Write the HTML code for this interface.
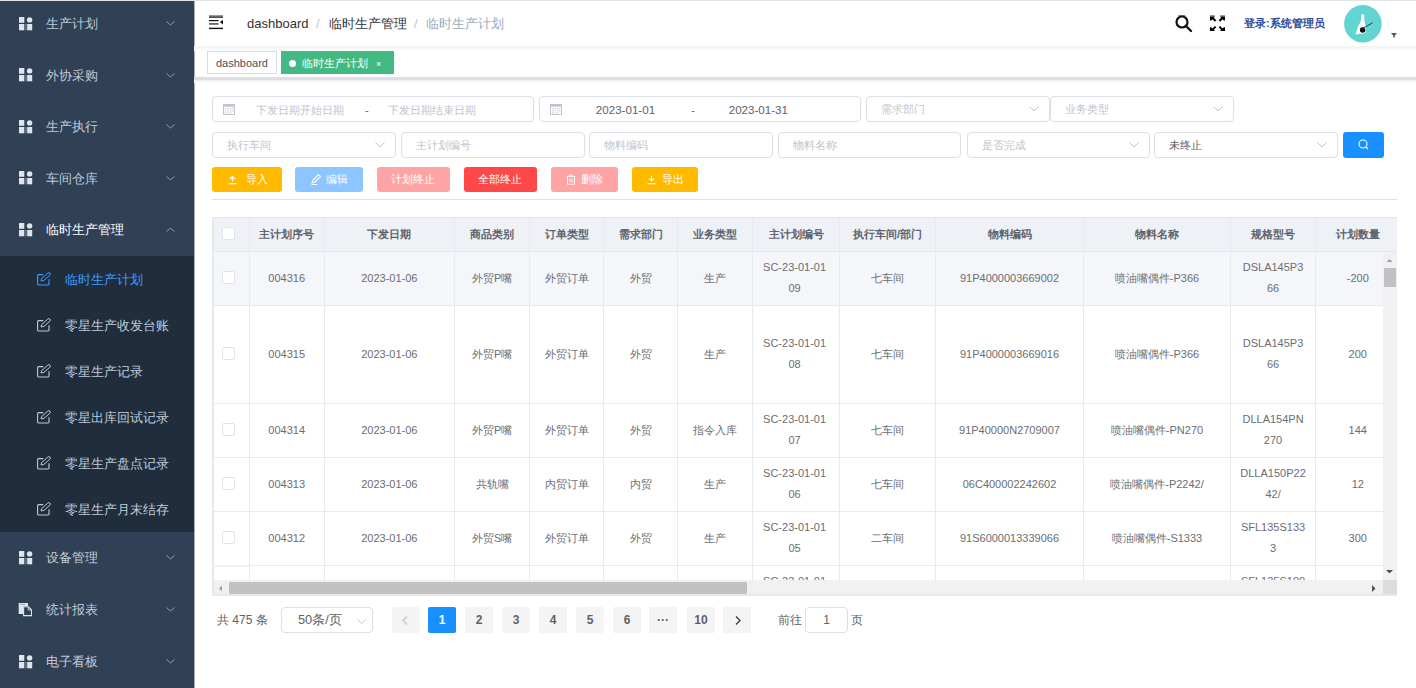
<!DOCTYPE html><html><head><meta charset="utf-8"><style>
*{box-sizing:border-box;margin:0;padding:0}
html,body{width:1416px;height:688px;overflow:hidden;background:#fff;font-family:"Liberation Sans",sans-serif;color:#606266}
.a{position:absolute;white-space:nowrap}
#side{position:absolute;left:0;top:0;width:194px;height:688px;background:#304156;overflow:hidden}
.mi{position:absolute;left:0;width:194px;height:51.5px;color:#bfcbd9;font-size:13px}
.mi .t{position:absolute;left:46px;top:0;line-height:51.5px;white-space:nowrap}
.mi svg.ic{position:absolute;left:18px;top:18.7px}
.mi svg.ar{position:absolute;left:166px;top:23px}
.sub{position:absolute;left:0;top:256px;width:194px;height:276px;background:#1f2d3d}
.si{position:absolute;left:0;width:194px;height:46px;color:#bfcbd9;font-size:13px}
.si .t{position:absolute;left:65px;top:1px;line-height:46px;white-space:nowrap}
.si svg{position:absolute;left:37px;top:16px}
.inp{position:absolute;height:26px;border:1px solid #dcdfe6;border-radius:4px;background:#fff;font-size:11px;color:#c0c4cc}
.inp .p{position:absolute;top:0;line-height:24px;white-space:nowrap}
.inp svg.ar{position:absolute;right:10px;top:9px}
.btn{position:absolute;top:166.5px;height:25px;border-radius:3px;color:#fff;font-size:11px;line-height:25px;white-space:nowrap}
.btn span{position:absolute;top:0.7px}
.th,.td{position:absolute;font-size:11px;text-align:center;line-height:21px;color:#6a6d73}
.th{color:#5d636e;font-weight:bold}
.pg{position:absolute;top:607px;width:28px;height:26px;background:#f4f4f5;border-radius:2px;font-size:12px;font-weight:bold;color:#606266;text-align:center;line-height:26px}
</style></head><body>
<div id="side">
<div class="mi" style="top:-1.75px"><svg class="ic" style="left:18.7px" width="14" height="14" viewBox="0 0 14 14"><g fill="#dfe5ec"><rect x="0" y="0" width="5.3" height="5.8"/><circle cx="10.6" cy="2.9" r="2.7"/><rect x="0" y="7" width="5.3" height="6.3"/><rect x="8.2" y="7" width="5" height="6.3"/></g><rect x="6.4" y="7" width="1.2" height="6.3" fill="#7d899a"/></svg><span class="t">生产计划</span><svg class="ar" width="9" height="5" viewBox="0 0 9 5"><path d="M0.5 0.5L4.5 4L8.5 0.5" fill="none" stroke="#8e9cae" stroke-width="1"/></svg></div>
<div class="mi" style="top:49.75px"><svg class="ic" style="left:18.7px" width="14" height="14" viewBox="0 0 14 14"><g fill="#dfe5ec"><rect x="0" y="0" width="5.3" height="5.8"/><circle cx="10.6" cy="2.9" r="2.7"/><rect x="0" y="7" width="5.3" height="6.3"/><rect x="8.2" y="7" width="5" height="6.3"/></g><rect x="6.4" y="7" width="1.2" height="6.3" fill="#7d899a"/></svg><span class="t">外协采购</span><svg class="ar" width="9" height="5" viewBox="0 0 9 5"><path d="M0.5 0.5L4.5 4L8.5 0.5" fill="none" stroke="#8e9cae" stroke-width="1"/></svg></div>
<div class="mi" style="top:101.25px"><svg class="ic" style="left:18.7px" width="14" height="14" viewBox="0 0 14 14"><g fill="#dfe5ec"><rect x="0" y="0" width="5.3" height="5.8"/><circle cx="10.6" cy="2.9" r="2.7"/><rect x="0" y="7" width="5.3" height="6.3"/><rect x="8.2" y="7" width="5" height="6.3"/></g><rect x="6.4" y="7" width="1.2" height="6.3" fill="#7d899a"/></svg><span class="t">生产执行</span><svg class="ar" width="9" height="5" viewBox="0 0 9 5"><path d="M0.5 0.5L4.5 4L8.5 0.5" fill="none" stroke="#8e9cae" stroke-width="1"/></svg></div>
<div class="mi" style="top:152.75px"><svg class="ic" style="left:18.7px" width="14" height="14" viewBox="0 0 14 14"><g fill="#dfe5ec"><rect x="0" y="0" width="5.3" height="5.8"/><circle cx="10.6" cy="2.9" r="2.7"/><rect x="0" y="7" width="5.3" height="6.3"/><rect x="8.2" y="7" width="5" height="6.3"/></g><rect x="6.4" y="7" width="1.2" height="6.3" fill="#7d899a"/></svg><span class="t">车间仓库</span><svg class="ar" width="9" height="5" viewBox="0 0 9 5"><path d="M0.5 0.5L4.5 4L8.5 0.5" fill="none" stroke="#8e9cae" stroke-width="1"/></svg></div>
<div class="mi" style="top:204.25px"><svg class="ic" style="left:18.7px" width="14" height="14" viewBox="0 0 14 14"><g fill="#dfe5ec"><rect x="0" y="0" width="5.3" height="5.8"/><circle cx="10.6" cy="2.9" r="2.7"/><rect x="0" y="7" width="5.3" height="6.3"/><rect x="8.2" y="7" width="5" height="6.3"/></g><rect x="6.4" y="7" width="1.2" height="6.3" fill="#7d899a"/></svg><span class="t" style="color:#fff">临时生产管理</span><svg class="ar" width="9" height="5" viewBox="0 0 9 5"><path d="M0.5 4.5L4.5 1L8.5 4.5" fill="none" stroke="#8e9cae" stroke-width="1"/></svg></div>
<div class="sub">
<div class="si" style="top:0px;color:#409eff"><svg width="14" height="14" viewBox="0 0 14 14"><path d="M6.2 2.6H1.7A1 1 0 0 0 0.6 3.7V11.9A1 1 0 0 0 1.7 13H10.9A1 1 0 0 0 12 11.9V7.3" fill="none" stroke="#409eff" stroke-width="1.1"/><path d="M4 8.9L4.7 6.5L10.8 1.1A1.4 1.4 0 0 1 12.9 3.2L6.9 8.4Z" fill="none" stroke="#409eff" stroke-width="1"/></svg><span class="t">临时生产计划</span></div>
<div class="si" style="top:46px;color:#bfcbd9"><svg width="14" height="14" viewBox="0 0 14 14"><path d="M6.2 2.6H1.7A1 1 0 0 0 0.6 3.7V11.9A1 1 0 0 0 1.7 13H10.9A1 1 0 0 0 12 11.9V7.3" fill="none" stroke="#bfcbd9" stroke-width="1.1"/><path d="M4 8.9L4.7 6.5L10.8 1.1A1.4 1.4 0 0 1 12.9 3.2L6.9 8.4Z" fill="none" stroke="#bfcbd9" stroke-width="1"/></svg><span class="t">零星生产收发台账</span></div>
<div class="si" style="top:92px;color:#bfcbd9"><svg width="14" height="14" viewBox="0 0 14 14"><path d="M6.2 2.6H1.7A1 1 0 0 0 0.6 3.7V11.9A1 1 0 0 0 1.7 13H10.9A1 1 0 0 0 12 11.9V7.3" fill="none" stroke="#bfcbd9" stroke-width="1.1"/><path d="M4 8.9L4.7 6.5L10.8 1.1A1.4 1.4 0 0 1 12.9 3.2L6.9 8.4Z" fill="none" stroke="#bfcbd9" stroke-width="1"/></svg><span class="t">零星生产记录</span></div>
<div class="si" style="top:138px;color:#bfcbd9"><svg width="14" height="14" viewBox="0 0 14 14"><path d="M6.2 2.6H1.7A1 1 0 0 0 0.6 3.7V11.9A1 1 0 0 0 1.7 13H10.9A1 1 0 0 0 12 11.9V7.3" fill="none" stroke="#bfcbd9" stroke-width="1.1"/><path d="M4 8.9L4.7 6.5L10.8 1.1A1.4 1.4 0 0 1 12.9 3.2L6.9 8.4Z" fill="none" stroke="#bfcbd9" stroke-width="1"/></svg><span class="t">零星出库回试记录</span></div>
<div class="si" style="top:184px;color:#bfcbd9"><svg width="14" height="14" viewBox="0 0 14 14"><path d="M6.2 2.6H1.7A1 1 0 0 0 0.6 3.7V11.9A1 1 0 0 0 1.7 13H10.9A1 1 0 0 0 12 11.9V7.3" fill="none" stroke="#bfcbd9" stroke-width="1.1"/><path d="M4 8.9L4.7 6.5L10.8 1.1A1.4 1.4 0 0 1 12.9 3.2L6.9 8.4Z" fill="none" stroke="#bfcbd9" stroke-width="1"/></svg><span class="t">零星生产盘点记录</span></div>
<div class="si" style="top:230px;color:#bfcbd9"><svg width="14" height="14" viewBox="0 0 14 14"><path d="M6.2 2.6H1.7A1 1 0 0 0 0.6 3.7V11.9A1 1 0 0 0 1.7 13H10.9A1 1 0 0 0 12 11.9V7.3" fill="none" stroke="#bfcbd9" stroke-width="1.1"/><path d="M4 8.9L4.7 6.5L10.8 1.1A1.4 1.4 0 0 1 12.9 3.2L6.9 8.4Z" fill="none" stroke="#bfcbd9" stroke-width="1"/></svg><span class="t">零星生产月末结存</span></div>
</div>
<div class="mi" style="top:532.05px"><svg class="ic" style="left:18.7px" width="14" height="14" viewBox="0 0 14 14"><g fill="#dfe5ec"><rect x="0" y="0" width="5.3" height="5.8"/><circle cx="10.6" cy="2.9" r="2.7"/><rect x="0" y="7" width="5.3" height="6.3"/><rect x="8.2" y="7" width="5" height="6.3"/></g><rect x="6.4" y="7" width="1.2" height="6.3" fill="#7d899a"/></svg><span class="t">设备管理</span><svg class="ar" width="9" height="5" viewBox="0 0 9 5"><path d="M0.5 0.5L4.5 4L8.5 0.5" fill="none" stroke="#8e9cae" stroke-width="1"/></svg></div>
<div class="mi" style="top:584.25px"><svg class="ic" width="14" height="14" viewBox="0 0 14 14"><path d="M0.7 0H10V3.2H5V11H0.7Z" fill="#dfe5ec"/><rect x="2" y="0.9" width="5" height="0.8" fill="#8a95a5"/><path d="M5.6 3.8H10.4L13.5 6.9V12.6H5.6Z" fill="none" stroke="#dfe5ec" stroke-width="1.1"/><path d="M10.2 3.8V7H13.5" fill="none" stroke="#dfe5ec" stroke-width="0.8"/></svg><span class="t">统计报表</span><svg class="ar" width="9" height="5" viewBox="0 0 9 5"><path d="M0.5 0.5L4.5 4L8.5 0.5" fill="none" stroke="#8e9cae" stroke-width="1"/></svg></div>
<div class="mi" style="top:635.95px"><svg class="ic" style="left:18.7px" width="14" height="14" viewBox="0 0 14 14"><g fill="#dfe5ec"><rect x="0" y="0" width="5.3" height="5.8"/><circle cx="10.6" cy="2.9" r="2.7"/><rect x="0" y="7" width="5.3" height="6.3"/><rect x="8.2" y="7" width="5" height="6.3"/></g><rect x="6.4" y="7" width="1.2" height="6.3" fill="#7d899a"/></svg><span class="t">电子看板</span><svg class="ar" width="9" height="5" viewBox="0 0 9 5"><path d="M0.5 0.5L4.5 4L8.5 0.5" fill="none" stroke="#8e9cae" stroke-width="1"/></svg></div>
</div>
<div class="a" style="left:194px;top:0;width:1px;height:688px;background:#aab0b8"></div>
<div class="a" style="left:0;top:0;width:1416px;height:1px;background:#e2e4e8"></div>
<div class="a" style="left:194px;top:46px;width:1222px;height:5px;background:linear-gradient(#f2f3f4,#fdfdfd)"></div>
<svg class="a" style="left:209px;top:15px" width="15" height="15" viewBox="0 0 15 15"><rect x="0" y="0" width="14" height="1.4" fill="#999"/><rect x="0" y="1.4" width="14" height="1.4" fill="#222"/><rect x="0" y="5" width="9.6" height="1.2" fill="#111"/><rect x="0" y="8" width="9.6" height="1.8" fill="#666"/><path d="M14 4.9L10.8 7.1L14 9.4Z" fill="#111"/><rect x="0" y="12.7" width="14" height="1.4" fill="#111"/></svg>
<div class="a" style="left:247px;top:15px;font-size:13px;line-height:18px;color:#303133">dashboard</div>
<div class="a" style="left:316px;top:15px;font-size:13px;line-height:18px;color:#c0c4cc">/</div>
<div class="a" style="left:329px;top:15px;font-size:13px;line-height:18px;color:#303133">临时生产管理</div>
<div class="a" style="left:414px;top:15px;font-size:13px;line-height:18px;color:#c0c4cc">/</div>
<div class="a" style="left:426px;top:15px;font-size:13px;line-height:18px;color:#97a8be">临时生产计划</div>
<svg class="a" style="left:1174.6px;top:15px" width="18" height="18" viewBox="0 0 18 18"><rect x="3.3" y="0.3" width="7" height="1" fill="#555"/><circle cx="7" cy="7" r="5.5" fill="none" stroke="#111" stroke-width="2.2"/><path d="M11 11L16 16" stroke="#111" stroke-width="2.4" stroke-linecap="round"/></svg>
<svg class="a" style="left:1210px;top:15px" width="15" height="16" viewBox="0 0 15 16"><g fill="#000"><rect x="0" y="0" width="4.8" height="1.6" fill="#999"/><rect x="10.2" y="0" width="4.8" height="1.6" fill="#999"/><path d="M0 1.6H5L3.8 2.8L6.3 5.3L4.9 6.7L2.4 4.2L1.2 5.4L0 5.4Z"/><path d="M15 1.6H10L11.2 2.8L8.7 5.3L10.1 6.7L12.6 4.2L13.8 5.4L15 5.4Z"/><path d="M0 16H5L3.8 14.8L6.3 12.3L4.9 10.9L2.4 13.4L1.2 12.2L0 12.2Z"/><path d="M15 16H10L11.2 14.8L8.7 12.3L10.1 10.9L12.6 13.4L13.8 12.2L15 12.2Z"/></g></svg>
<div class="a" style="left:1244px;top:15px;font-size:11px;line-height:16px;color:#2d4e9e;font-weight:bold">登录:系统管理员</div>
<svg class="a" style="left:1344px;top:4.5px" width="38" height="38" viewBox="0 0 38 38"><circle cx="18.9" cy="18.8" r="18.8" fill="#62d4d2"/><path d="M17.2 9.5Q18.8 8.8 20.2 9.8L20.3 14.5L21 19L22.2 23L21.3 27.5L19 28.8L15.5 28.5L14 29.5L11.5 28.8L12.8 25.5L14.2 20.5L16.5 17.5L17 14Z" fill="#fff"/><circle cx="18.6" cy="25" r="2.7" fill="#111"/><path d="M16.5 22.8L20.5 21.8L20.8 24Z" fill="#444"/><path d="M20.5 22.5L28.5 17.8" stroke="#222" stroke-width="0.9"/></svg>
<svg class="a" style="left:1391px;top:32.5px" width="6" height="5" viewBox="0 0 6 5"><path d="M0 0H6L3.8 2.5V4.5H2.2V2.5Z" fill="#555"/></svg>
<div class="a" style="left:194px;top:77px;width:1222px;height:2.5px;background:#dcdfe5"></div><div class="a" style="left:194px;top:79.5px;width:1222px;height:3px;background:linear-gradient(#eceef2,#fff)"></div>
<div class="a" style="left:207px;top:51px;width:70px;height:23px;border:1px solid #d8dce5;background:#fff;font-size:11px;line-height:23px;color:#495060;padding-left:8px">dashboard</div>
<div class="a" style="left:281px;top:51px;width:113px;height:23px;background:#42b983;font-size:11px;line-height:23px;color:#fff"><span style="position:absolute;left:8px;top:9px;width:7px;height:7px;border-radius:50%;background:#fff"></span><span style="position:absolute;left:21px;top:1px">临时生产计划</span><span style="position:absolute;left:95px;top:1.5px;font-size:9px">×</span></div>
<div class="inp" style="left:212.0px;top:96px;width:322.0px"><svg class="a" style="left:10px;top:6px" width="12" height="12" viewBox="0 0 12 12"><rect x="0.5" y="1.5" width="11" height="10" fill="none" stroke="#c0c4cc" stroke-width="1"/><rect x="0.5" y="1.5" width="11" height="2.2" fill="#c0c4cc"/><g fill="#d0d3da"><rect x="2" y="5" width="1.5" height="1.2"/><rect x="4.5" y="5" width="1.5" height="1.2"/><rect x="7" y="5" width="1.5" height="1.2"/><rect x="9" y="5" width="1.5" height="1.2"/><rect x="2" y="7.2" width="1.5" height="1.2"/><rect x="4.5" y="7.2" width="1.5" height="1.2"/><rect x="7" y="7.2" width="1.5" height="1.2"/><rect x="9" y="7.2" width="1.5" height="1.2"/><rect x="2" y="9.3" width="1.5" height="1.2"/><rect x="4.5" y="9.3" width="1.5" height="1.2"/><rect x="7" y="9.3" width="1.5" height="1.2"/></g></svg><span class="p" style="left:43px;top:1px">下发日期开始日期</span><span class="p" style="left:152px;top:1px;color:#606266">-</span><span class="p" style="left:175px;top:1px">下发日期结束日期</span></div>
<div class="inp" style="left:539.3px;top:96px;width:322.0px"><svg class="a" style="left:10px;top:6px" width="12" height="12" viewBox="0 0 12 12"><rect x="0.5" y="1.5" width="11" height="10" fill="none" stroke="#c0c4cc" stroke-width="1"/><rect x="0.5" y="1.5" width="11" height="2.2" fill="#c0c4cc"/><g fill="#d0d3da"><rect x="2" y="5" width="1.5" height="1.2"/><rect x="4.5" y="5" width="1.5" height="1.2"/><rect x="7" y="5" width="1.5" height="1.2"/><rect x="9" y="5" width="1.5" height="1.2"/><rect x="2" y="7.2" width="1.5" height="1.2"/><rect x="4.5" y="7.2" width="1.5" height="1.2"/><rect x="7" y="7.2" width="1.5" height="1.2"/><rect x="9" y="7.2" width="1.5" height="1.2"/><rect x="2" y="9.3" width="1.5" height="1.2"/><rect x="4.5" y="9.3" width="1.5" height="1.2"/><rect x="7" y="9.3" width="1.5" height="1.2"/></g></svg><span class="p" style="left:55.5px;top:1px;font-size:11.6px;color:#606266">2023-01-01</span><span class="p" style="left:151px;top:1px;color:#606266">-</span><span class="p" style="left:188.4px;top:1px;font-size:11.6px;color:#606266">2023-01-31</span></div>
<div class="inp" style="left:865.8px;top:96px;width:184.0px"><span class="p" style="left:14px;color:#c0c4cc">需求部门</span><svg class="ar" width="10" height="6" viewBox="0 0 10 6"><path d="M0.5 0.5L5 5L9.5 0.5" fill="none" stroke="#c0c4cc" stroke-width="1"/></svg></div>
<div class="inp" style="left:1050.3px;top:96px;width:183.9px"><span class="p" style="left:14px;color:#c0c4cc">业务类型</span><svg class="ar" width="10" height="6" viewBox="0 0 10 6"><path d="M0.5 0.5L5 5L9.5 0.5" fill="none" stroke="#c0c4cc" stroke-width="1"/></svg></div>
<div class="inp" style="left:212.0px;top:132px;width:184.4px"><span class="p" style="left:14px;color:#c0c4cc">执行车间</span><svg class="ar" width="10" height="6" viewBox="0 0 10 6"><path d="M0.5 0.5L5 5L9.5 0.5" fill="none" stroke="#c0c4cc" stroke-width="1"/></svg></div>
<div class="inp" style="left:400.6px;top:132px;width:184.0px"><span class="p" style="left:14px;color:#c0c4cc">主计划编号</span></div>
<div class="inp" style="left:589.3px;top:132px;width:184.0px"><span class="p" style="left:14px;color:#c0c4cc">物料编码</span></div>
<div class="inp" style="left:777.8px;top:132px;width:183.2px"><span class="p" style="left:14px;color:#c0c4cc">物料名称</span></div>
<div class="inp" style="left:966.5px;top:132px;width:183.3px"><span class="p" style="left:14px;color:#c0c4cc">是否完成</span><svg class="ar" width="10" height="6" viewBox="0 0 10 6"><path d="M0.5 0.5L5 5L9.5 0.5" fill="none" stroke="#c0c4cc" stroke-width="1"/></svg></div>
<div class="inp" style="left:1154.4px;top:132px;width:183.6px"><span class="p" style="left:14px;color:#606266">未终止</span><svg class="ar" width="10" height="6" viewBox="0 0 10 6"><path d="M0.5 0.5L5 5L9.5 0.5" fill="none" stroke="#c0c4cc" stroke-width="1"/></svg></div>
<div class="a" style="left:1343px;top:132px;width:41px;height:26px;background:#1890ff;border-radius:3px"><svg class="a" style="left:15px;top:7px" width="11" height="11" viewBox="0 0 11 11"><circle cx="5" cy="5" r="4" fill="none" stroke="#fff" stroke-width="1.1"/><path d="M8 8L10 10" stroke="#fff" stroke-width="1.1"/></svg></div>
<div class="btn" style="left:212px;width:70px;background:#ffba00"><svg class="a" style="left:16px;top:8.5px" width="10" height="10" viewBox="0 0 10 10"><path d="M4.5 1.5V6.5M2 4L4.5 1.5L7 4M0.5 8.8H8.8" fill="none" stroke="#fff" stroke-width="1.1"/></svg><span style="left:34px">导入</span></div>
<div class="btn" style="left:295px;width:68px;background:#8cc5ff"><svg class="a" style="left:16px;top:6px" width="11" height="12" viewBox="0 0 11 12"><path d="M1 10L2 7L7.5 1.5L9.5 3.5L4 9Z M0.5 11.5H6" fill="none" stroke="#fff" stroke-width="1.1"/></svg><span style="left:31px">编辑</span></div>
<div class="btn" style="left:377px;width:73px;background:#ffa4a4"><span style="left:14px">计划终止</span></div>
<div class="btn" style="left:464px;width:73px;background:#ff4949"><span style="left:14px">全部终止</span></div>
<div class="btn" style="left:551px;width:66.5px;background:#ffa4a4"><svg class="a" style="left:15px;top:7.5px" width="10" height="11" viewBox="0 0 10 11"><path d="M0.5 2.5H9.5M3.5 2.5V1H6.5V2.5M1.5 2.5V10.3H8.5V2.5M4 4.5V8.5M6 4.5V8.5" fill="none" stroke="#fff" stroke-width="0.9"/></svg><span style="left:30px">删除</span></div>
<div class="btn" style="left:632px;width:66px;background:#ffba00"><svg class="a" style="left:15px;top:8.5px" width="10" height="10" viewBox="0 0 10 10"><path d="M4.5 1V6M2 3.5L4.5 6L7 3.5M0.5 8.8H8.8" fill="none" stroke="#fff" stroke-width="1.1"/></svg><span style="left:30px">导出</span></div>
<div class="a" style="left:212px;top:199px;width:1185px;height:1px;background:#dcdfe6"></div>
<div class="a" style="left:212px;top:217px;width:1185px;height:378px;overflow:hidden">
<div class="a" style="left:0;top:0;width:1185px;height:35px;background:#eef1f6;border-bottom:1px solid #e3e8ee"></div>
<div class="a" style="left:0;top:35px;width:1185px;height:53px;background:#f4f6fa"></div>
<div class="a" style="left:0;top:88px;width:1185px;height:1px;background:#e6ebf1"></div>
<div class="a" style="left:0;top:186px;width:1185px;height:1px;background:#e6ebf1"></div>
<div class="a" style="left:0;top:240px;width:1185px;height:1px;background:#e6ebf1"></div>
<div class="a" style="left:0;top:294px;width:1185px;height:1px;background:#e6ebf1"></div>
<div class="a" style="left:0;top:348px;width:1185px;height:1px;background:#e6ebf1"></div>
<div class="a" style="left:37px;top:0;width:1px;height:378px;background:#e6ebf1"></div>
<div class="a" style="left:112px;top:0;width:1px;height:378px;background:#e6ebf1"></div>
<div class="a" style="left:242px;top:0;width:1px;height:378px;background:#e6ebf1"></div>
<div class="a" style="left:317px;top:0;width:1px;height:378px;background:#e6ebf1"></div>
<div class="a" style="left:391px;top:0;width:1px;height:378px;background:#e6ebf1"></div>
<div class="a" style="left:465px;top:0;width:1px;height:378px;background:#e6ebf1"></div>
<div class="a" style="left:540px;top:0;width:1px;height:378px;background:#e6ebf1"></div>
<div class="a" style="left:627px;top:0;width:1px;height:378px;background:#e6ebf1"></div>
<div class="a" style="left:723px;top:0;width:1px;height:378px;background:#e6ebf1"></div>
<div class="a" style="left:871px;top:0;width:1px;height:378px;background:#e6ebf1"></div>
<div class="a" style="left:1018px;top:0;width:1px;height:378px;background:#e6ebf1"></div>
<div class="a" style="left:1103px;top:0;width:1px;height:378px;background:#e6ebf1"></div>
<div class="th" style="left:37.4px;width:74.6px;top:7px">主计划序号</div>
<div class="th" style="left:112.0px;width:130.7px;top:7px">下发日期</div>
<div class="th" style="left:242.7px;width:74.8px;top:7px">商品类别</div>
<div class="th" style="left:317.5px;width:74.1px;top:7px">订单类型</div>
<div class="th" style="left:391.6px;width:74.1px;top:7px">需求部门</div>
<div class="th" style="left:465.7px;width:75.1px;top:7px">业务类型</div>
<div class="th" style="left:540.8px;width:86.6px;top:7px">主计划编号</div>
<div class="th" style="left:627.4px;width:96.1px;top:7px">执行车间/部门</div>
<div class="th" style="left:723.5px;width:148.0px;top:7px">物料编码</div>
<div class="th" style="left:871.5px;width:147.0px;top:7px">物料名称</div>
<div class="th" style="left:1018.5px;width:85.1px;top:7px">规格型号</div>
<div class="th" style="left:1103.6px;width:84.4px;top:7px">计划数量</div>
<div class="a" style="left:10px;top:10.0px;width:13px;height:13px;border:1px solid #e1e4ea;border-radius:2px;background:#fff"></div>
<div class="a" style="left:10px;top:54.3px;width:13px;height:13px;border:1px solid #e1e4ea;border-radius:2px;background:#fff"></div>
<div class="td" style="left:37.4px;width:74.6px;top:50.8px">004316</div>
<div class="td" style="left:112.0px;width:130.7px;top:50.8px">2023-01-06</div>
<div class="td" style="left:242.7px;width:74.8px;top:50.8px">外贸P嘴</div>
<div class="td" style="left:317.5px;width:74.1px;top:50.8px">外贸订单</div>
<div class="td" style="left:391.6px;width:74.1px;top:50.8px">外贸</div>
<div class="td" style="left:465.7px;width:75.1px;top:50.8px">生产</div>
<div class="td" style="left:539.3px;width:86.6px;top:40.3px">SC-23-01-01<br>09</div>
<div class="td" style="left:627.4px;width:96.1px;top:50.8px">七车间</div>
<div class="td" style="left:723.5px;width:148.0px;top:50.8px">91P4000003669002</div>
<div class="td" style="left:871.5px;width:147.0px;top:50.8px">喷油嘴偶件-P366</div>
<div class="td" style="left:1018.5px;width:85.1px;top:40.3px">DSLA145P3<br>66</div>
<div class="td" style="left:1103.6px;width:84.4px;top:50.8px">-200</div>
<div class="a" style="left:10px;top:130.3px;width:13px;height:13px;border:1px solid #e1e4ea;border-radius:2px;background:#fff"></div>
<div class="td" style="left:37.4px;width:74.6px;top:126.8px">004315</div>
<div class="td" style="left:112.0px;width:130.7px;top:126.8px">2023-01-06</div>
<div class="td" style="left:242.7px;width:74.8px;top:126.8px">外贸P嘴</div>
<div class="td" style="left:317.5px;width:74.1px;top:126.8px">外贸订单</div>
<div class="td" style="left:391.6px;width:74.1px;top:126.8px">外贸</div>
<div class="td" style="left:465.7px;width:75.1px;top:126.8px">生产</div>
<div class="td" style="left:539.3px;width:86.6px;top:116.3px">SC-23-01-01<br>08</div>
<div class="td" style="left:627.4px;width:96.1px;top:126.8px">七车间</div>
<div class="td" style="left:723.5px;width:148.0px;top:126.8px">91P4000003669016</div>
<div class="td" style="left:871.5px;width:147.0px;top:126.8px">喷油嘴偶件-P366</div>
<div class="td" style="left:1018.5px;width:85.1px;top:116.3px">DSLA145P3<br>66</div>
<div class="td" style="left:1103.6px;width:84.4px;top:126.8px">200</div>
<div class="a" style="left:10px;top:206.3px;width:13px;height:13px;border:1px solid #e1e4ea;border-radius:2px;background:#fff"></div>
<div class="td" style="left:37.4px;width:74.6px;top:202.8px">004314</div>
<div class="td" style="left:112.0px;width:130.7px;top:202.8px">2023-01-06</div>
<div class="td" style="left:242.7px;width:74.8px;top:202.8px">外贸P嘴</div>
<div class="td" style="left:317.5px;width:74.1px;top:202.8px">外贸订单</div>
<div class="td" style="left:391.6px;width:74.1px;top:202.8px">外贸</div>
<div class="td" style="left:465.7px;width:75.1px;top:202.8px">指令入库</div>
<div class="td" style="left:539.3px;width:86.6px;top:192.3px">SC-23-01-01<br>07</div>
<div class="td" style="left:627.4px;width:96.1px;top:202.8px">七车间</div>
<div class="td" style="left:723.5px;width:148.0px;top:202.8px">91P40000N2709007</div>
<div class="td" style="left:871.5px;width:147.0px;top:202.8px">喷油嘴偶件-PN270</div>
<div class="td" style="left:1018.5px;width:85.1px;top:192.3px">DLLA154PN<br>270</div>
<div class="td" style="left:1103.6px;width:84.4px;top:202.8px">144</div>
<div class="a" style="left:10px;top:260.4px;width:13px;height:13px;border:1px solid #e1e4ea;border-radius:2px;background:#fff"></div>
<div class="td" style="left:37.4px;width:74.6px;top:256.9px">004313</div>
<div class="td" style="left:112.0px;width:130.7px;top:256.9px">2023-01-06</div>
<div class="td" style="left:242.7px;width:74.8px;top:256.9px">共轨嘴</div>
<div class="td" style="left:317.5px;width:74.1px;top:256.9px">内贸订单</div>
<div class="td" style="left:391.6px;width:74.1px;top:256.9px">内贸</div>
<div class="td" style="left:465.7px;width:75.1px;top:256.9px">生产</div>
<div class="td" style="left:539.3px;width:86.6px;top:246.4px">SC-23-01-01<br>06</div>
<div class="td" style="left:627.4px;width:96.1px;top:256.9px">七车间</div>
<div class="td" style="left:723.5px;width:148.0px;top:256.9px">06C400002242602</div>
<div class="td" style="left:871.5px;width:147.0px;top:256.9px">喷油嘴偶件-P2242/</div>
<div class="td" style="left:1018.5px;width:85.1px;top:246.4px">DLLA150P22<br>42/</div>
<div class="td" style="left:1103.6px;width:84.4px;top:256.9px">12</div>
<div class="a" style="left:10px;top:314.4px;width:13px;height:13px;border:1px solid #e1e4ea;border-radius:2px;background:#fff"></div>
<div class="td" style="left:37.4px;width:74.6px;top:310.9px">004312</div>
<div class="td" style="left:112.0px;width:130.7px;top:310.9px">2023-01-06</div>
<div class="td" style="left:242.7px;width:74.8px;top:310.9px">外贸S嘴</div>
<div class="td" style="left:317.5px;width:74.1px;top:310.9px">外贸订单</div>
<div class="td" style="left:391.6px;width:74.1px;top:310.9px">外贸</div>
<div class="td" style="left:465.7px;width:75.1px;top:310.9px">生产</div>
<div class="td" style="left:539.3px;width:86.6px;top:300.4px">SC-23-01-01<br>05</div>
<div class="td" style="left:627.4px;width:96.1px;top:310.9px">二车间</div>
<div class="td" style="left:723.5px;width:148.0px;top:310.9px">91S6000013339066</div>
<div class="td" style="left:871.5px;width:147.0px;top:310.9px">喷油嘴偶件-S1333</div>
<div class="td" style="left:1018.5px;width:85.1px;top:300.4px">SFL135S133<br>3</div>
<div class="td" style="left:1103.6px;width:84.4px;top:310.9px">300</div>
<div class="td" style="left:37.4px;width:74.6px;top:364.9px"></div>
<div class="td" style="left:112.0px;width:130.7px;top:364.9px"></div>
<div class="td" style="left:242.7px;width:74.8px;top:364.9px"></div>
<div class="td" style="left:317.5px;width:74.1px;top:364.9px"></div>
<div class="td" style="left:391.6px;width:74.1px;top:364.9px"></div>
<div class="td" style="left:465.7px;width:75.1px;top:364.9px"></div>
<div class="td" style="left:539.3px;width:86.6px;top:354.4px">SC-23-01-01<br>04</div>
<div class="td" style="left:627.4px;width:96.1px;top:364.9px"></div>
<div class="td" style="left:723.5px;width:148.0px;top:364.9px"></div>
<div class="td" style="left:871.5px;width:147.0px;top:364.9px"></div>
<div class="td" style="left:1018.5px;width:85.1px;top:354.4px">SFL135S100<br>0</div>
<div class="td" style="left:1103.6px;width:84.4px;top:364.9px"></div>
<div class="a" style="left:1170.5px;top:35px;width:14.5px;height:328px;background:#f1f1f1"></div>
<svg class="a" style="left:1174.2px;top:41.8px" width="7" height="3.5" viewBox="0 0 7 3.5"><path d="M0 3.5L3.5 0L7 3.5Z" fill="#a3a3a3"/></svg>
<div class="a" style="left:1172px;top:51px;width:12px;height:19px;background:#c1c1c1"></div>
<svg class="a" style="left:1174.2px;top:352.5px" width="7" height="3.5" viewBox="0 0 7 3.5"><path d="M0 0L3.5 3.5L7 0Z" fill="#505050"/></svg>
<div class="a" style="left:0;top:363px;width:1170.5px;height:15px;background:#f1f1f1"></div>
<div class="a" style="left:1170.5px;top:363px;width:15px;height:15px;background:#dcdcdc"></div>
<svg class="a" style="left:6.9px;top:367.5px" width="3.5" height="7" viewBox="0 0 3.5 7"><path d="M3.5 0L0 3.5L3.5 7Z" fill="#a3a3a3"/></svg>
<div class="a" style="left:17px;top:365px;width:518px;height:12px;background:#c1c1c1"></div>
<svg class="a" style="left:1160.4px;top:367.7px" width="3.5" height="7" viewBox="0 0 3.5 7"><path d="M0 0L3.5 3.5L0 7Z" fill="#505050"/></svg>
<div class="a" style="left:0;top:0;width:1185px;height:1px;background:#dfe6ec"></div>
<div class="a" style="left:0;top:0;width:2px;height:378px;background:#e4e9f0"></div>
<div class="a" style="left:0;top:348px;width:37px;height:2px;background:#edf1f6"></div>
</div>
<div class="a" style="left:212px;top:594px;width:1185px;height:2px;background:#e4e9f0"></div>
<div class="a" style="left:217px;top:611px;font-size:12px;line-height:18px;color:#606266">共 475 条</div>
<div class="inp" style="left:281px;top:607px;width:92px;height:26px;border-color:#dcdfe6;font-size:12px"><span class="p" style="left:16px;color:#606266;font-size:12.8px">50条/页</span><svg class="ar" style="right:6px;top:10.5px" width="9" height="5" viewBox="0 0 9 5"><path d="M0.5 0.5L4.5 4.5L8.5 0.5" fill="none" stroke="#c0c4cc" stroke-width="1"/></svg></div>
<div class="pg" style="left:392px"><svg class="a" style="left:10px;top:9px" width="6" height="9" viewBox="0 0 6 9"><path d="M5 0.5L1 4.5L5 8.5" fill="none" stroke="#c0c4cc" stroke-width="1.2"/></svg></div>
<div class="pg" style="left:428px;background:#1890ff;color:#fff">1</div>
<div class="pg" style="left:465px">2</div>
<div class="pg" style="left:502px">3</div>
<div class="pg" style="left:539px">4</div>
<div class="pg" style="left:576px">5</div>
<div class="pg" style="left:613px">6</div>
<div class="pg" style="left:649px">···</div>
<div class="pg" style="left:687px">10</div>
<div class="pg" style="left:723px"><svg class="a" style="left:12px;top:9px" width="6" height="9" viewBox="0 0 6 9"><path d="M1 0.5L5 4.5L1 8.5" fill="none" stroke="#303133" stroke-width="1.2"/></svg></div>
<div class="a" style="left:778px;top:611px;font-size:12px;line-height:18px;color:#606266">前往</div>
<div class="inp" style="left:805px;top:607px;width:43px;height:26px;font-size:12px;color:#606266;text-align:center;line-height:24px">1</div>
<div class="a" style="left:851px;top:611px;font-size:12px;line-height:18px;color:#606266">页</div>
</body></html>
